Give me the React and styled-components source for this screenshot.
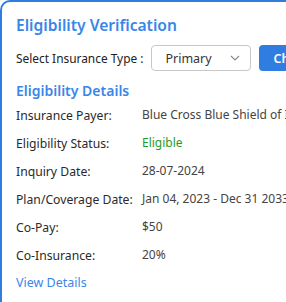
import React from 'react'
import styled, { createGlobalStyle } from 'styled-components'

const GlobalStyle = createGlobalStyle`
  body {
    margin: 0;
    background: #fff;
    font-family: "Noto Sans", "Open Sans", sans-serif;
    overflow: hidden;
  }
`

const Card = styled.div`
  width: 340px;
  min-height: 340px;
  border: 2px solid #2f7de1;
  border-radius: 10px;
  padding: 10px 14px;
  box-sizing: border-box;
`

const Title = styled.h2`
  margin: 0;
  font-size: 15.6px;
  font-weight: 600;
  color: #3a86e8;
  line-height: 26px;
`

const SelectRow = styled.div`
  display: flex;
  align-items: center;
  gap: 8px;
  margin-top: 7px;
  font-size: 11.9px;
  color: #222;
  white-space: nowrap;
`

const SelectBox = styled.div`
  flex-shrink: 0;
  width: 100px;
  height: 26px;
  box-sizing: border-box;
  border: 1px solid #c8c8c8;
  border-radius: 4px;
  display: flex;
  align-items: center;
  justify-content: space-between;
  padding: 0 10px 0 13px;
  font-size: 12.5px;
  color: #333;
`

const Button = styled.button`
  flex-shrink: 0;
  height: 26px;
  padding: 0 14px;
  border: none;
  border-radius: 4px;
  background: #2f7de1;
  color: #fff;
  font-family: inherit;
  font-size: 12.5px;
  font-weight: 600;
`

const Subtitle = styled.h3`
  margin: 9px 0 4px;
  font-size: 14px;
  font-weight: 600;
  color: #3a86e8;
  line-height: 22px;
`

const Grid = styled.div`
  display: grid;
  grid-template-columns: 126px auto;
  row-gap: 8px;
  white-space: nowrap;
`

const Label = styled.div`
  font-size: 12.2px;
  color: #2a2a2a;
  line-height: 20px;
`

const Value = styled.div`
  font-size: 12px;
  color: ${p => p.color || '#444'};
  line-height: 18px;
`

const Link = styled.a`
  display: block;
  margin-top: 8px;
  font-size: 12.5px;
  color: #3a86e8;
  text-decoration: none;
`

const Chevron = () => (
  <svg width="10" height="6" viewBox="0 0 10 6" fill="none">
    <path d="M1 1l4 4 4-4" stroke="#888" strokeWidth="1.1" />
  </svg>
)

const rows = [
  ['Insurance Payer:', 'Blue Cross Blue Shield of Illinois'],
  ['Eligibility Status:', 'Eligible', '#1f9a2a'],
  ['Inquiry Date:', '28-07-2024'],
  ['Plan/Coverage Date:', 'Jan 04, 2023 - Dec 31 2033'],
  ['Co-Pay:', '$50'],
  ['Co-Insurance:', '20%'],
]

const App = () => {
  return (
    <>
      <GlobalStyle />
      <Card>
        <Title>Eligibility Verification</Title>
        <SelectRow>
          <span>Select Insurance Type :</span>
          <SelectBox>
            <span>Primary</span>
            <Chevron />
          </SelectBox>
          <Button>Check</Button>
        </SelectRow>
        <Subtitle>Eligibility Details</Subtitle>
        <Grid>
          {rows.map(([l, v, c]) => (
            <React.Fragment key={l}>
              <Label>{l}</Label>
              <Value color={c}>{v}</Value>
            </React.Fragment>
          ))}
        </Grid>
        <Link href="#">View Details</Link>
      </Card>
    </>
  )
}

export default App
